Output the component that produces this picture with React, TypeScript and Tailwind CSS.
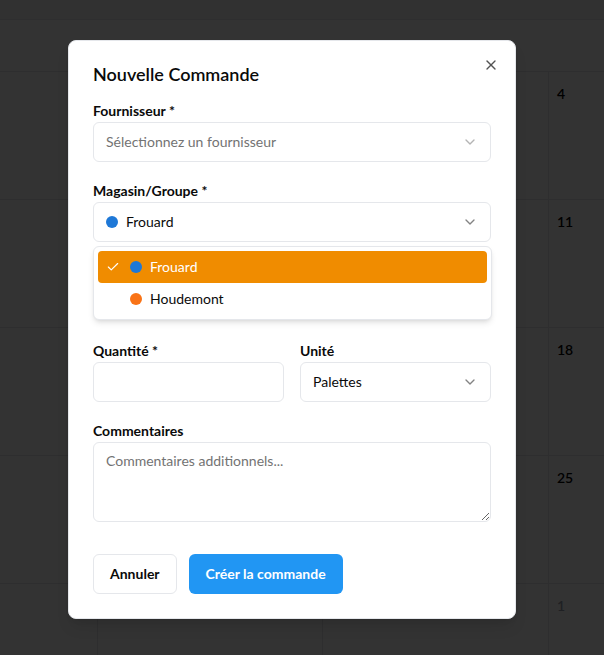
import { Check, ChevronDown, X } from "lucide-react";
import React from "react";

// only the last column shows beside the dialog
const weeks = [
  ["", "", "", "4"],
  ["", "", "", "11"],
  ["", "", "", "18"],
  ["", "", "", "25"],
  ["", "", "", "1"],
];

const Calendar = () => {
  return (
    <div className="h-[655px] w-[604px] overflow-hidden bg-white">
      <div className="h-[20px] border-b border-gray-200 bg-gray-100" />
      <div className="h-[52px] border-b border-gray-200" />
      {weeks.map((week, i) => (
        <div
          key={i}
          className="grid h-[128px] grid-cols-[97px_225px_226px_226px] border-b border-gray-200"
        >
          {week.map((day, j) => (
            <div
              key={j}
              className={`border-gray-200 px-[8px] pt-3 text-sm font-semibold ${
                j > 0 ? "border-l" : ""
              } ${i === 4 && j === 3 ? "text-gray-400" : "text-black"}`}
            >
              {day}
            </div>
          ))}
        </div>
      ))}
    </div>
  );
};

const Field = ({
  label,
  children,
}: {
  label: string;
  children: React.ReactNode;
}) => (
  <div className="flex flex-col">
    <label className="h-5 pt-px text-sm leading-5 font-bold text-[#0a0a0a]">
      {label}
    </label>
    <div className="mt-0.5">{children}</div>
  </div>
);

const Trigger = ({
  children,
  muted,
}: {
  children: React.ReactNode;
  muted?: boolean;
}) => (
  <div className="flex h-10 w-full items-center justify-between rounded-md border border-gray-200 bg-white px-3 text-sm text-[#0a0a0a]">
    <div className="flex items-center gap-2">{children}</div>
    <ChevronDown
      className={`h-4 w-4 ${muted ? "opacity-30" : "opacity-50"}`}
      strokeWidth={2}
    />
  </div>
);

export default function App() {
  return (
    <div className="relative h-[655px] w-[604px] overflow-hidden font-['Lato',sans-serif]">
      <Calendar />
      <div className="absolute inset-0 bg-black/80" />

      <div className="absolute left-[68px] top-[40px] w-[448px] rounded-lg border border-gray-200 bg-white p-6 shadow-lg">
        <button className="absolute right-4 top-4 text-[#0a0a0a] opacity-70">
          <X className="h-4 w-4" />
        </button>

        <h2 className="text-lg leading-none font-semibold text-[#0a0a0a]">
          Nouvelle Commande
        </h2>

        <div className="mt-[17px] flex flex-col gap-[18px]">
          <Field label="Fournisseur *">
            <Trigger muted>
              <span className="text-[#737373]">Sélectionnez un fournisseur</span>
            </Trigger>
          </Field>

          <Field label="Magasin/Groupe *">
            <div className="relative">
              <Trigger>
                <span className="h-3 w-3 rounded-full bg-[#1e78d7]" />
                <span>Frouard</span>
              </Trigger>

              <div className="absolute -right-px left-0 top-full z-10 mt-1 rounded-md border border-gray-200 bg-white p-1 shadow-md">
                <div className="relative flex h-8 items-center gap-2 rounded-sm bg-[#f08c00] pl-8 text-sm text-white">
                  <Check className="absolute left-2 h-3.5 w-3.5" strokeWidth={2} />
                  <span className="h-3 w-3 rounded-full bg-[#1e78d7]" />
                  <span>Frouard</span>
                </div>
                <div className="flex h-8 items-center gap-2 rounded-sm pl-8 text-sm text-[#0a0a0a]">
                  <span className="h-3 w-3 rounded-full bg-[#f97316]" />
                  <span>Houdemont</span>
                </div>
              </div>
            </div>
          </Field>

          <div className="h-[62px]" />

          <div className="grid grid-cols-2 gap-4">
            <Field label="Quantité *">
              <input className="h-10 w-full rounded-md border border-gray-200 px-3 text-sm outline-none" />
            </Field>
            <Field label="Unité">
              <Trigger>
                <span>Palettes</span>
              </Trigger>
            </Field>
          </div>

          <Field label="Commentaires">
            <textarea
              className="block h-[80px] min-h-[80px] w-full rounded-md border border-gray-200 px-3 py-2 text-sm outline-none placeholder:text-[#737373]"
              placeholder="Commentaires additionnels..."
            />
          </Field>

          <div className="mt-[14px] flex gap-3">
            <button className="h-10 rounded-md border border-gray-200 bg-white px-4 text-sm font-bold text-[#0a0a0a]">
              Annuler
            </button>
            <button className="h-10 rounded-md bg-[#2196f3] px-[17px] text-sm font-bold text-white">
              Créer la commande
            </button>
          </div>
        </div>
      </div>
    </div>
  );
}
